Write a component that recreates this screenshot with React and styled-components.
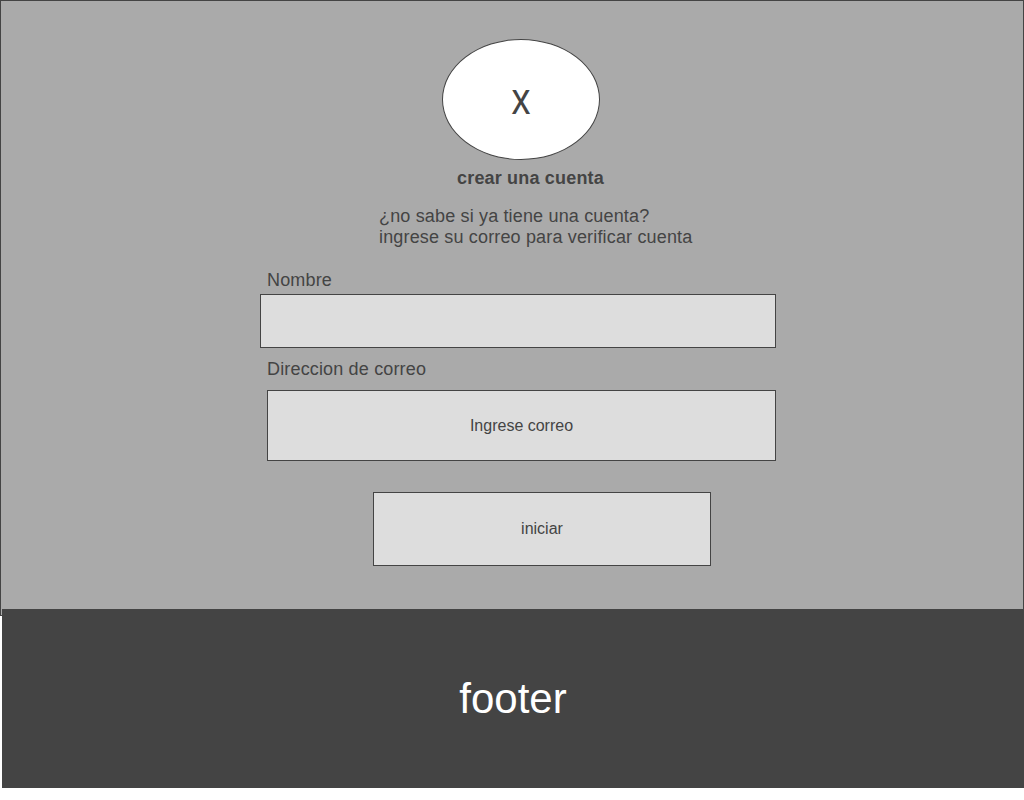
import React from 'react';
import styled, { createGlobalStyle } from 'styled-components';

const GlobalStyle = createGlobalStyle`
   body{
      margin: 0;
      background: #fff;
      font-family: "Liberation Sans", Arial, sans-serif;
   }
`

const Panel = styled.main`
   box-sizing: border-box;
   width: 1024px;
   height: 616px;
   padding-top: 38px;
   background-color: #aaa;
   border: 1px solid #444;
   color: #444;
`

const Column = styled.div`
   width: 516px;
   margin-left: 259px;
   display: flex;
   flex-direction: column;
   align-items: flex-start;
`

const Avatar = styled.div`
   box-sizing: border-box;
   width: 158px;
   height: 121px;
   margin-left: 182px;
   border: 1px solid #444;
   border-radius: 50%;
   background: #fff;
   display: flex;
   align-items: center;
   justify-content: center;

   span{
      display: inline-block;
      font-size: 44px;
      line-height: 1;
      transform: scaleX(0.86);
      margin-top: -2px;
   }
`

const Title = styled.h2`
   margin: 8px 0 0 197px;
   font-size: 18px;
   line-height: 21px;
   font-weight: bold;
   letter-spacing: 0.18px;
`

const Info = styled.p`
   margin: 17px 0 0 119px;
   font-size: 18px;
   line-height: 21px;
   letter-spacing: 0.16px;
`

const Label = styled.label`
   margin: ${props => props.top}px 0 0 7px;
   font-size: 18px;
   line-height: 21px;
   letter-spacing: 0.16px;
`

const Field = styled.input`
   box-sizing: border-box;
   display: block;
   width: ${props => props.w}px;
   height: ${props => props.h}px;
   margin: ${props => props.top}px 0 0 ${props => props.left || 0}px;
   padding: 0;
   background: #ddd;
   border: 1px solid #444;
   border-radius: 0;
   outline: none;
   font-family: "Liberation Sans", Arial, sans-serif;
   font-size: 16px;
   color: #444;
   text-align: center;

   &::placeholder{
      color: #444;
      opacity: 1;
   }
`

const Submit = styled.button`
   box-sizing: border-box;
   width: 338px;
   height: 74px;
   margin: 31px 0 0 113px;
   padding: 0;
   background: #ddd;
   border: 1px solid #444;
   border-radius: 0;
   font-family: "Liberation Sans", Arial, sans-serif;
   font-size: 16px;
   color: #444;
`

const Footer = styled.footer`
   position: relative;
   height: 179px;
   margin: -7px 0 0 2px;
   background-color: #444;
   color: #fff;
   font-size: 42px;
   display: flex;
   align-items: center;
   justify-content: center;
`

const App = () => {
   return (
      <>
         <GlobalStyle />
         <Panel>
            <Column>
               <Avatar><span>x</span></Avatar>
               <Title>crear una cuenta</Title>
               <Info>
                  ¿no sabe si ya tiene una cuenta?<br />
                  ingrese su correo para verificar cuenta
               </Info>

               <Label top={22} htmlFor='nombre'>Nombre</Label>
               <Field id='nombre' name='nombre' type="text" w={516} h={54} top={3} />

               <Label top={11} htmlFor='correo'>Direccion de correo</Label>
               <Field id='correo' name='correo' type="email" placeholder="Ingrese correo" w={509} h={71} top={10} left={7} />

               <Submit type="submit">iniciar</Submit>
            </Column>
         </Panel>
         <Footer>footer</Footer>
      </>
   );
}

export default App;
